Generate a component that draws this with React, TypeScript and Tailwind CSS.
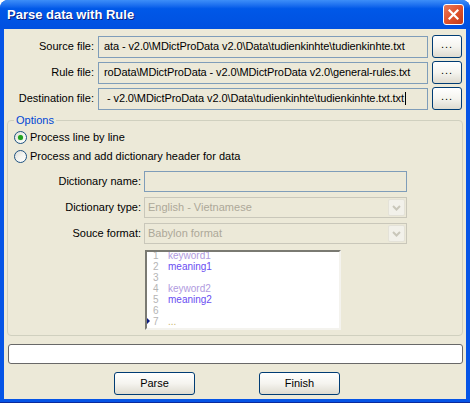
import React from "react";

const font = { fontFamily: '"Liberation Sans", Arial, sans-serif' };

function XPButton({ children, w, h = 23 }: { children: React.ReactNode; w: number; h?: number }) {
  return (
    <div
      className="flex items-center justify-center rounded-[3px] border border-[#003c74] bg-gradient-to-b from-[#ffffff] via-[#f5f4ef] to-[#dedbd0] text-[11px] text-black shrink-0"
      style={{ width: w, height: h }}
    >
      {children}
    </div>
  );
}

function FileRow({ label, value, caret }: { label: string; value: string; caret?: boolean }) {
  return (
    <div className="flex items-center h-[23px]">
      <div className="w-[91px] text-right text-[11px] text-black pr-[1px]">{label}</div>
      <div className="ml-[3px] w-[330px] h-[22px] border border-[#7f9db9] bg-[#ece9d8] flex items-center pl-[5px] overflow-hidden">
        <span className="text-[11px] text-black whitespace-pre tracking-[-0.1px]">{value}</span>
        {caret && <span className="inline-block w-px h-[13px] bg-black ml-[1px]" />}
      </div>
      <div className="ml-[4px]">
        <XPButton w={30}>
          <span className="-mt-[4px] tracking-[1px]">...</span>
        </XPButton>
      </div>
    </div>
  );
}

function Radio({ checked, label }: { checked?: boolean; label: string }) {
  return (
    <div className="flex items-center h-[19px]">
      <div className="w-[13px] h-[13px] rounded-full border border-[#1c5180] bg-gradient-to-br from-[#dcdcd7] via-[#f4f4f0] to-[#ffffff] flex items-center justify-center">
        {checked && <div className="w-[5px] h-[5px] rounded-full bg-[#21a121] shadow-[0_0_1px_#5fd35f]" />}
      </div>
      <span className="ml-[3px] text-[11px] text-black">{label}</span>
    </div>
  );
}

function Combo({ value }: { value: string }) {
  return (
    <div className="w-[263px] h-[21px] border border-[#c9c7ba] bg-[#ece9d8] flex items-center">
      <span className="flex-1 pl-[3px] text-[11px] text-[#aca899]">{value}</span>
      <div className="w-[17px] h-[17px] mr-[1px] rounded-[2px] bg-[#f2f1ea] border border-[#e4e2d8] flex items-center justify-center">
        <svg width="9" height="6" viewBox="0 0 9 6">
          <path d="M1 1 L4.5 4.5 L8 1" stroke="#c9c7ba" strokeWidth="2" fill="none" />
        </svg>
      </div>
    </div>
  );
}

export default function App() {
  const lines: { n: number; text: string; color: string }[] = [
    { n: 1, text: "keyword1", color: "#b09ae0" },
    { n: 2, text: "meaning1", color: "#6a4df2" },
    { n: 3, text: "", color: "" },
    { n: 4, text: "keyword2", color: "#b09ae0" },
    { n: 5, text: "meaning2", color: "#6a4df2" },
    { n: 6, text: "", color: "" },
    { n: 7, text: "...", color: "#cbb56a" },
  ];
  return (
    <div style={font} className="w-[470px] h-[403px] flex flex-col bg-[#0554e6] rounded-t-[8px] overflow-hidden border-b border-[#0a2a9c]">
      {/* Title bar */}
      <div className="h-[29px] shrink-0 flex items-center justify-between pl-[7px] pr-[6px] bg-gradient-to-b from-[#3d8ef8] via-[#0058e8] via-30% to-[#0050e0]">
        <span className="text-white font-bold text-[13px] [text-shadow:1px_1px_0_#0a1e80]">Parse data with Rule</span>
        <div className="w-[21px] h-[21px] rounded-[3px] border border-white bg-gradient-to-br from-[#e87a5a] via-[#e0522c] to-[#c23a18] flex items-center justify-center">
          <svg width="11" height="11" viewBox="0 0 11 11">
            <path d="M1.5 1.5 L9.5 9.5 M9.5 1.5 L1.5 9.5" stroke="white" strokeWidth="2.2" strokeLinecap="square" />
          </svg>
        </div>
      </div>
      {/* Client */}
      <div className="flex-1 mx-[4px] mb-[3px] bg-[#ece9d8] flex flex-col pt-[6px]">
        <div className="flex flex-col gap-[3px]">
          <FileRow label="Source file:" value="ata - v2.0\MDictProData v2.0\Data\tudienkinhte\tudienkinhte.txt" />
          <FileRow label="Rule file:" value="roData\MDictProData - v2.0\MDictProData v2.0\general-rules.txt" />
          <FileRow label="Destination file:" value=" - v2.0\MDictProData v2.0\Data\tudienkinhte\tudienkinhte.txt.txt" caret />
        </div>
        {/* Options group */}
        <div className="relative mt-[10px] ml-[3px] w-[456px] h-[216px] border border-[#d0d0bf] rounded-[4px]">
          <div className="absolute -top-[8px] left-[6px] px-[2px] bg-[#ece9d8] text-[11px] text-[#0046d5] leading-[14px]">Options</div>
          <div className="flex flex-col pl-[6px] pt-[7px]">
            <Radio checked label="Process line by line" />
            <Radio label="Process and add dictionary header for data" />
          </div>
          <div className="flex flex-col gap-[5px] mt-[5px]">
            <div className="flex items-center">
              <div className="w-[134px] text-right text-[11px] text-black pr-[1px]">Dictionary name:</div>
              <div className="ml-[2px] w-[263px] h-[21px] border border-[#7f9db9] bg-[#ece9d8]" />
            </div>
            <div className="flex items-center">
              <div className="w-[134px] text-right text-[11px] text-black pr-[1px]">Dictionary type:</div>
              <div className="ml-[2px]"><Combo value="English - Vietnamese" /></div>
            </div>
            <div className="flex items-center">
              <div className="w-[134px] text-right text-[11px] text-black pr-[1px]">Souce format:</div>
              <div className="ml-[2px]"><Combo value="Babylon format" /></div>
            </div>
          </div>
          <div className="ml-[137px] mt-[6px] w-[196px] h-[80px] border-2 border-t-[#7a7a72] border-l-[#7a7a72] border-b-[#f4f3ee] border-r-[#f4f3ee] bg-white overflow-hidden">
            <div className="relative flex flex-col -mt-[2px]">
              {lines.map((l) => (
                <div key={l.n} className="flex h-[11px] items-center text-[10px] leading-[11px]">
                  <span className="w-[21px] pl-[6px] text-[#b4b4b4]">{l.n}</span>
                  <span style={{ color: l.color }}>{l.text}</span>
                </div>
              ))}
              <div className="absolute left-0 top-[68px] w-0 h-0 border-t-[3px] border-b-[3px] border-l-[3px] border-t-transparent border-b-transparent border-l-[#0a1a80]" />
            </div>
          </div>
        </div>
        {/* progress bar */}
        <div className="mt-[8px] ml-[4px] w-[455px] h-[20px] rounded-[3px] border border-[#686868] bg-white" />
        {/* buttons */}
        <div className="flex mt-[8px] ml-[110px] gap-[64px]">
          <XPButton w={81}>Parse</XPButton>
          <XPButton w={81}>Finish</XPButton>
        </div>
      </div>
    </div>
  );
}
